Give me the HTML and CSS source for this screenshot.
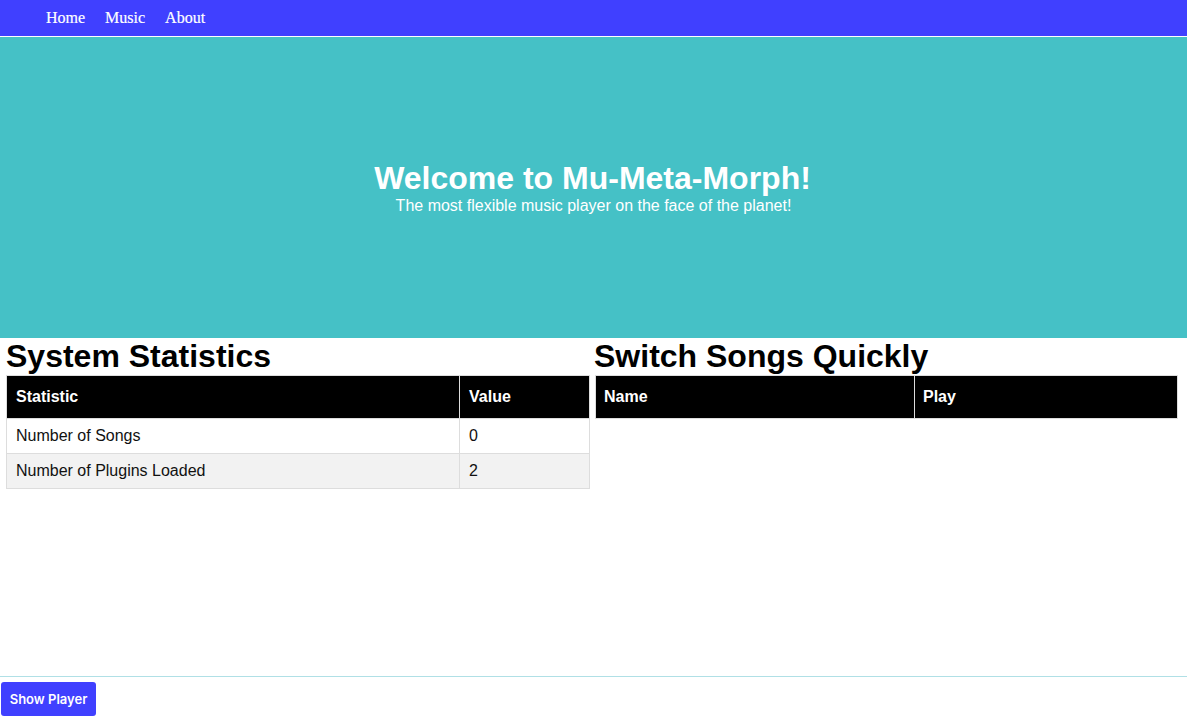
FILE: index.html
```html
<!DOCTYPE html>
<html>
<head>
<meta charset="utf-8">
<title>Mu-Meta-Morph</title>
<link rel="stylesheet" href="styles.css">
</head>
<body>
<nav class="nav">
  <a class="nav-link" href="#">Home</a>
  <a class="nav-link" href="#">Music</a>
  <a class="nav-link" href="#">About</a>
</nav>
<header class="hero">
  <h1 class="hero-title">Welcome to Mu-Meta-Morph!</h1>
  <p class="hero-sub">The most flexible music player on the face of the planet!</p>
</header>
<main class="main">
  <section class="panel panel-left">
    <h2 class="panel-title">System Statistics</h2>
    <table class="tbl">
      <thead>
        <tr><th class="col-stat">Statistic</th><th>Value</th></tr>
      </thead>
      <tbody>
        <tr><td>Number of Songs</td><td>0</td></tr>
        <tr class="alt"><td>Number of Plugins Loaded</td><td>2</td></tr>
      </tbody>
    </table>
  </section>
  <section class="panel panel-right">
    <h2 class="panel-title">Switch Songs Quickly</h2>
    <table class="tbl tbl-right">
      <thead>
        <tr><th class="col-name">Name</th><th>Play</th></tr>
      </thead>
      <tbody></tbody>
    </table>
  </section>
</main>
<footer class="footer">
  <button class="btn">Show Player</button>
</footer>
</body>
</html>
```
FILE: styles.css
```css
html, body {
  margin: 0;
  padding: 0;
  height: 100%;
}
body {
  display: flex;
  flex-direction: column;
  font-family: "Liberation Sans", Arial, sans-serif;
  color: #000;
  background: #fff;
}
.nav {
  height: 36px;
  background: #4040ff;
  border-bottom: 1px solid #fff;
  display: flex;
  align-items: center;
  gap: 20px;
  padding-left: 46px;
  flex-shrink: 0;
}
.nav-link {
  font-family: "Liberation Serif", "Times New Roman", serif;
  font-size: 16px;
  color: #fff;
  text-decoration: none;
  padding-bottom: 1px;
  -webkit-text-stroke: 0.2px #fff;
}
.hero {
  height: 301px;
  background: #45c1c6;
  display: flex;
  flex-direction: column;
  align-items: center;
  justify-content: center;
  color: #fff;
  flex-shrink: 0;
}
.hero-title {
  margin: 0;
  font-size: 32px;
  font-weight: bold;
  line-height: 37px;
  padding-right: 2px;
}
.hero-sub {
  margin: 0;
  font-size: 16px;
  line-height: 18px;
}
.main {
  flex: 1;
  display: grid;
  grid-template-columns: 584px 583px;
  column-gap: 5px;
  padding: 0 9px 0 6px;
  align-items: start;
}
.panel-title {
  margin: 0;
  font-size: 32px;
  font-weight: bold;
  line-height: 37px;
}
.panel-right .panel-title {
  margin-left: -1px;
}
.tbl {
  width: 100%;
  border-collapse: collapse;
  font-size: 16px;
}
.tbl th {
  background: #000;
  color: #fff;
  text-align: left;
  font-weight: bold;
  padding: 12px 8px 12px 9px;
  line-height: 18px;
  border: 1px solid #ddd;
}
.tbl-right th {
  padding-left: 8px;
}
.tbl td {
  padding: 8px 8px 8px 9px;
  line-height: 18px;
  border: 1px solid #ddd;
  color: #111;
}
.tbl .alt td {
  background: #f2f2f2;
}
.col-stat {
  width: 435px;
}
.col-name {
  width: 302px;
}
.footer {
  border-top: 1px solid #b0e0e6;
  padding: 5px 1px 6px;
  flex-shrink: 0;
}
.btn {
  display: block;
  height: 34px;
  width: 95px;
  padding: 0;
  background: #4040ff;
  color: #fff;
  border: none;
  border-radius: 3px;
  font-family: Inter, "Noto Sans", sans-serif;
  font-weight: 600;
  font-size: 13px;
}
```
